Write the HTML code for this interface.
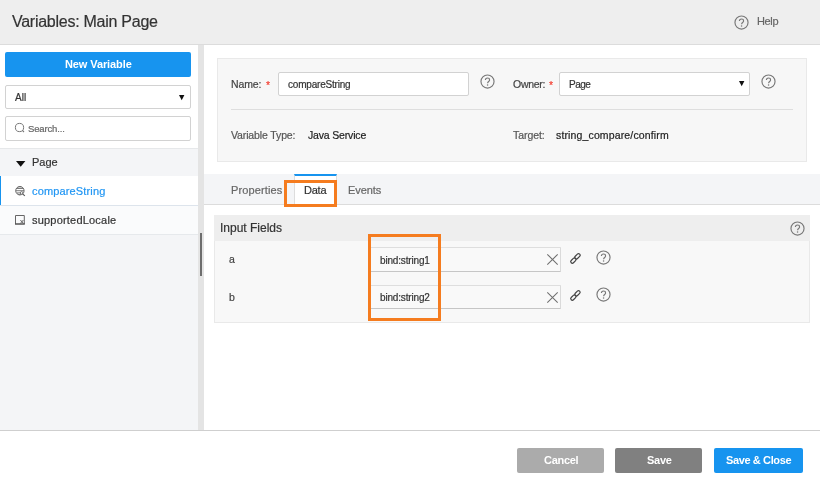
<!DOCTYPE html>
<html>
<head>
<meta charset="utf-8">
<title>Variables: Main Page</title>
<style>
html,body{margin:0;padding:0;}
body{width:820px;height:490px;position:relative;overflow:hidden;background:#fff;font-family:"Liberation Sans",sans-serif;font-size:11px;color:#333;}
.abs{position:absolute;}
.t{position:absolute;white-space:nowrap;line-height:14px;will-change:transform;-webkit-text-stroke:0.2px currentColor;}
#hdr{left:0;top:0;width:820px;height:44px;background:#eeeeee;border-bottom:1px solid #dcdcdc;}
#title{letter-spacing:-0.26px;left:12px;top:12px;font-size:16px;line-height:20px;color:#333;}
#helpt{letter-spacing:-0.37px;left:757.3px;top:14.4px;font-size:11px;color:#666;}
#side{left:0;top:45px;width:198px;height:385px;background:#fff;}
#tree{left:0;top:102px;width:198px;height:281px;background:#f4f5f7;border-top:1px solid #e6e8ea;}
#split{left:198px;top:45px;width:5.5px;height:385px;background:#e4e4e4;}
#handle{left:200px;top:233px;width:1.9px;height:43px;background:#6e6e6e;}
#newvar{left:5px;top:52px;width:185.5px;height:24.5px;background:#1794ef;border-radius:2px;color:#fff;font-weight:bold;text-align:center;}
.box{position:absolute;box-sizing:border-box;background:#fff;border:1px solid #d2d2d2;border-radius:2px;}
.btn{position:absolute;height:24.5px;top:448px;border-radius:2px;color:#fff;font-weight:bold;}
.row{position:absolute;left:0;width:198px;}
#ftline{left:0;top:430px;width:820px;height:1px;background:#cfcfcf;}
#form{left:217px;top:58px;width:590px;height:103.5px;box-sizing:border-box;background:#f7f7f7;border:1px solid #e9e9e9;}
#hr{left:231px;top:109px;width:562px;height:1px;background:#dedede;}
#tabs{left:203.5px;top:174.2px;width:617px;height:30px;background:#f4f5f7;border-bottom:1px solid #dcdcdc;}
#tabdata{left:294.3px;top:174.2px;width:42.5px;height:31px;background:#fff;border-top:2px solid #1794ef;border-left:1px solid #ddd;border-right:1px solid #ddd;box-sizing:border-box;}
.orange{position:absolute;box-sizing:border-box;border:3px solid #f57c1f;}
#inp{left:214px;top:215px;width:596px;height:108px;box-sizing:border-box;background:#f8f8f8;border:1px solid #e9e9e9;}
#inph{left:214.3px;top:215.3px;width:595.5px;height:25.3px;background:#eeeeee;}
.fld{position:absolute;box-sizing:border-box;background:#f9f9f9;border:1px solid #dadada;border-top-color:#dedede;border-bottom-color:#c6c6c6;border-radius:1px;}
svg{position:absolute;overflow:visible;}
</style>
</head>
<body>
<!-- header -->
<div class="abs" id="hdr"></div>
<div class="t" id="title">Variables: Main Page</div>
<svg style="left:734px;top:15px" width="15" height="15" viewBox="0 0 15 15"><circle cx="7.5" cy="7.5" r="6.55" fill="none" stroke="#777" stroke-width="1.15"/><path d="M5.4 6.1c0-1.3 0.9-2.1 2.1-2.1s2.1 0.8 2.1 1.9c0 1.5-2 1.7-2 3.3" fill="none" stroke="#777" stroke-width="1.1"/><circle cx="7.55" cy="10.9" r="0.75" fill="#777"/></svg>
<div class="t" id="helpt">Help</div>

<!-- sidebar -->
<div class="abs" id="side"></div>
<div class="abs" id="newvar"></div>
<div class="t" id="nvt" style="-webkit-text-stroke:0;letter-spacing:-0.1px;left:65px;top:57px;color:#fff;font-weight:bold;font-size:11px;">New Variable</div>
<div class="box" style="left:5px;top:85.2px;width:185.5px;height:23.8px;"></div>
<div class="t" id="allt" style="left:15.3px;top:91px;font-size:10px;color:#333;">All</div>
<svg style="left:179.2px;top:94.8px" width="6" height="6" viewBox="0 0 6 6"><path d="M0 0h5.4L2.7 5.3z" fill="#111"/></svg>
<div class="box" style="left:5px;top:116px;width:185.5px;height:24.5px;"></div>
<svg style="left:14px;top:122px" width="12" height="12" viewBox="0 0 12 12"><circle cx="5.5" cy="5.5" r="4.1" fill="none" stroke="#777" stroke-width="1"/><path d="M8.4 8.4l1.6 1.6" stroke="#777" stroke-width="1.1"/></svg>
<div class="t" id="srch" style="letter-spacing:-0.15px;left:28px;top:121.5px;font-size:9.5px;color:#666;">Search...</div>

<div class="abs" id="tree" style="top:148px;"></div>
<svg style="left:15.5px;top:160.5px" width="10" height="6" viewBox="0 0 10 6"><path d="M0 0h9.4L4.7 5.8z" fill="#111"/></svg>
<div class="t" id="paget" style="left:32px;top:155px;font-size:11px;color:#333;">Page</div>
<div class="row" style="top:175.6px;height:29.4px;background:#fff;box-sizing:border-box;border-left:1.2px solid #1794ef;"></div>
<div class="t" id="cst" style="letter-spacing:0.15px;left:32px;top:183.5px;font-size:11px;color:#2196f3;">compareString</div>
<div class="row" style="top:204.6px;height:30.4px;background:#fafbfc;border-top:1px solid #dde4ec;border-bottom:1px solid #e6e9ec;box-sizing:border-box;"></div>
<div class="t" id="slt" style="letter-spacing:0.2px;left:32px;top:213px;font-size:11px;color:#333;">supportedLocale</div>
<!-- service icon -->
<svg style="left:15px;top:185.8px" width="11" height="11" viewBox="0 0 11 11"><circle cx="4.9" cy="4.7" r="4.2" fill="none" stroke="#5a5a5a" stroke-width="0.9"/><path d="M1.6 2.5h6.6M0.8 4.7h8.2M1.6 6.9h5" stroke="#5a5a5a" stroke-width="0.8"/><path d="M3.2 1.2c1-0.5 2.4-0.5 3.4 0M3.2 8.3c0.8 0.4 1.6 0.5 2.4 0.3" stroke="#5a5a5a" stroke-width="0.7" fill="none"/><circle cx="6.6" cy="6.9" r="1.3" fill="#fff" stroke="#555" stroke-width="0.8"/><path d="M7.6 7.9l2.2 2" stroke="#555" stroke-width="1.1"/></svg>
<!-- locale icon -->
<svg style="left:15.3px;top:215.2px" width="10" height="10" viewBox="0 0 10 10"><path d="M0.5 9V0.5h8.8V9" fill="none" stroke="#666" stroke-width="1"/><path d="M0 9h9.8" stroke="#555" stroke-width="1.5"/><path d="M5.4 5l3 3.4M8.4 5l-3 3.4" stroke="#555" stroke-width="0.9"/></svg>

<div class="abs" id="split"></div>
<div class="abs" id="handle"></div>

<!-- form panel -->
<div class="abs" id="form"></div>
<div class="t" id="namel" style="letter-spacing:-0.14px;left:231px;top:77px;font-size:10.5px;color:#444;">Name:</div>
<div class="t" style="left:266px;top:78px;font-size:10.5px;color:#f44336;">*</div>
<div class="box" style="left:278px;top:72.4px;width:191px;height:23.8px;"></div>
<div class="t" id="nameval" style="letter-spacing:-0.2px;left:287.5px;top:78px;font-size:10px;color:#333;">compareString</div>
<svg style="left:480.2px;top:74.1px" width="15" height="15" viewBox="0 0 15 15"><circle cx="7.5" cy="7.5" r="6.55" fill="none" stroke="#777" stroke-width="1.15"/><path d="M5.4 6.1c0-1.3 0.9-2.1 2.1-2.1s2.1 0.8 2.1 1.9c0 1.5-2 1.7-2 3.3" fill="none" stroke="#777" stroke-width="1.1"/><circle cx="7.55" cy="10.9" r="0.75" fill="#777"/></svg>
<div class="t" id="ownl" style="letter-spacing:-0.27px;left:512.5px;top:77px;font-size:10.5px;color:#444;">Owner:</div>
<div class="t" style="left:549px;top:78px;font-size:10.5px;color:#f44336;">*</div>
<div class="box" style="left:559.2px;top:72.4px;width:191px;height:23.8px;"></div>
<div class="t" id="ownval" style="letter-spacing:-0.5px;left:568.5px;top:77.7px;font-size:10px;color:#333;">Page</div>
<svg style="left:739px;top:81.3px" width="6" height="6" viewBox="0 0 6 6"><path d="M0 0h5.4L2.7 5.3z" fill="#111"/></svg>
<svg style="left:761.3px;top:73.9px" width="15" height="15" viewBox="0 0 15 15"><circle cx="7.5" cy="7.5" r="6.55" fill="none" stroke="#777" stroke-width="1.15"/><path d="M5.4 6.1c0-1.3 0.9-2.1 2.1-2.1s2.1 0.8 2.1 1.9c0 1.5-2 1.7-2 3.3" fill="none" stroke="#777" stroke-width="1.1"/><circle cx="7.55" cy="10.9" r="0.75" fill="#777"/></svg>
<div class="abs" id="hr"></div>
<div class="t" id="vtl" style="letter-spacing:-0.13px;left:231px;top:128px;font-size:10.5px;color:#555;">Variable Type:</div>
<div class="t" id="vtv" style="letter-spacing:-0.17px;left:308px;top:128px;font-size:10.5px;color:#222;">Java Service</div>
<div class="t" id="tgl" style="letter-spacing:-0.06px;left:512.5px;top:128px;font-size:10.5px;color:#555;">Target:</div>
<div class="t" id="tgv" style="letter-spacing:0.14px;left:555.5px;top:128px;font-size:10.5px;color:#222;">string_compare/confirm</div>

<!-- tabs -->
<div class="abs" id="tabs"></div>
<div class="abs" id="tabdata"></div>
<div class="t" id="tp" style="letter-spacing:0.12px;left:231px;top:182.5px;font-size:11px;color:#666;">Properties</div>
<div class="t" id="td" style="letter-spacing:-0.22px;left:304px;top:182.5px;font-size:11px;color:#333;">Data</div>
<div class="t" id="te" style="letter-spacing:-0.08px;left:348px;top:182.5px;font-size:11px;color:#666;">Events</div>
<div class="orange" style="left:284px;top:180px;width:53px;height:27px;"></div>

<!-- input fields -->
<div class="abs" id="inp"></div>
<div class="abs" id="inph"></div>
<div class="t" id="ift" style="left:220px;top:220.5px;font-size:12px;color:#333;">Input Fields</div>
<svg style="left:790px;top:221px" width="15" height="15" viewBox="0 0 15 15"><circle cx="7.5" cy="7.5" r="6.55" fill="none" stroke="#777" stroke-width="1.15"/><path d="M5.4 6.1c0-1.3 0.9-2.1 2.1-2.1s2.1 0.8 2.1 1.9c0 1.5-2 1.7-2 3.3" fill="none" stroke="#777" stroke-width="1.1"/><circle cx="7.55" cy="10.9" r="0.75" fill="#777"/></svg>
<div class="t" id="la" style="left:228.5px;top:251.8px;font-size:10.5px;color:#444;">a</div>
<div class="t" id="lb" style="left:228.5px;top:289.5px;font-size:10.5px;color:#444;">b</div>
<div class="fld" style="left:369px;top:247.2px;width:192px;height:24.7px;"></div>
<div class="fld" style="left:369px;top:285px;width:192px;height:24px;"></div>
<div class="t" id="b1" style="letter-spacing:-0.17px;left:380px;top:253.5px;font-size:10px;color:#333;">bind:string1</div>
<div class="t" id="b2" style="letter-spacing:-0.17px;left:380px;top:291.3px;font-size:10px;color:#333;">bind:string2</div>
<svg style="left:547px;top:254px" width="11" height="11" viewBox="0 0 11 11"><path d="M0.3 0.3l10.4 10.4M10.7 0.3L0.3 10.7" stroke="#707070" stroke-width="1.05"/></svg>
<svg style="left:547px;top:291.5px" width="11" height="11" viewBox="0 0 11 11"><path d="M0.3 0.3l10.4 10.4M10.7 0.3L0.3 10.7" stroke="#707070" stroke-width="1.05"/></svg>
<!-- link icons -->
<svg style="left:569.5px;top:252.5px" width="11" height="11" viewBox="0 0 11 11"><g fill="none" stroke="#444" stroke-width="1.2" stroke-linecap="round"><rect x="-1.6" y="-3.1" width="3.2" height="6.2" rx="1.6" transform="translate(7.45 3.3) rotate(45)"/><rect x="-1.6" y="-3.1" width="3.2" height="6.2" rx="1.6" transform="translate(3.4 7.55) rotate(45)"/></g></svg>
<svg style="left:569.5px;top:290px" width="11" height="11" viewBox="0 0 11 11"><g fill="none" stroke="#444" stroke-width="1.2" stroke-linecap="round"><rect x="-1.6" y="-3.1" width="3.2" height="6.2" rx="1.6" transform="translate(7.45 3.3) rotate(45)"/><rect x="-1.6" y="-3.1" width="3.2" height="6.2" rx="1.6" transform="translate(3.4 7.55) rotate(45)"/></g></svg>
<svg style="left:596px;top:249.5px" width="15" height="15" viewBox="0 0 15 15"><circle cx="7.5" cy="7.5" r="6.55" fill="none" stroke="#777" stroke-width="1.15"/><path d="M5.4 6.1c0-1.3 0.9-2.1 2.1-2.1s2.1 0.8 2.1 1.9c0 1.5-2 1.7-2 3.3" fill="none" stroke="#777" stroke-width="1.1"/><circle cx="7.55" cy="10.9" r="0.75" fill="#777"/></svg>
<svg style="left:596px;top:287px" width="15" height="15" viewBox="0 0 15 15"><circle cx="7.5" cy="7.5" r="6.55" fill="none" stroke="#777" stroke-width="1.15"/><path d="M5.4 6.1c0-1.3 0.9-2.1 2.1-2.1s2.1 0.8 2.1 1.9c0 1.5-2 1.7-2 3.3" fill="none" stroke="#777" stroke-width="1.1"/><circle cx="7.55" cy="10.9" r="0.75" fill="#777"/></svg>
<div class="orange" style="left:368px;top:234px;width:73px;height:87px;"></div>

<!-- footer -->
<div class="abs" id="ftline"></div>
<div class="btn" style="left:517px;width:87px;background:#ababab;"></div>
<div class="btn" style="left:615.3px;width:87px;background:#808080;"></div>
<div class="btn" style="left:714px;width:88.5px;background:#1794ef;"></div>
<div class="t" id="bc" style="-webkit-text-stroke:0;letter-spacing:-0.3px;left:544px;top:452.7px;color:#fff;font-weight:bold;font-size:11px;">Cancel</div>
<div class="t" id="bs" style="-webkit-text-stroke:0;letter-spacing:-0.27px;left:647px;top:452.7px;color:#fff;font-weight:bold;font-size:11px;">Save</div>
<div class="t" id="bsc" style="-webkit-text-stroke:0;letter-spacing:-0.38px;left:726px;top:452.7px;color:#fff;font-weight:bold;font-size:11px;">Save &amp; Close</div>
</body>
</html>
